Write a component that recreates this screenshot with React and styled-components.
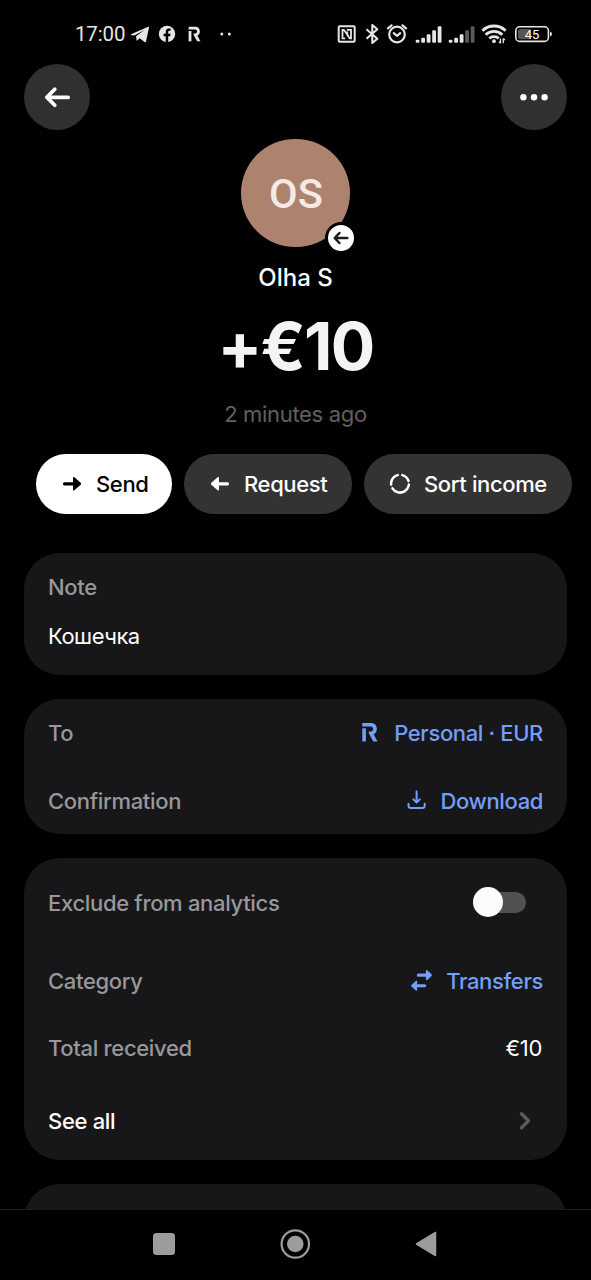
import React from "react";
import styled, { createGlobalStyle } from "styled-components";

const GlobalStyle = createGlobalStyle`
  * {
    box-sizing: border-box;
  }
  body {
    margin: 0;
    background: #000;
    overflow: hidden;
  }
`;

const Screen = styled.div`
  display: flex;
  flex-direction: column;
  width: 591px;
  height: 1280px;
  overflow: hidden;
  background: #000;
  color: #fff;
  font-family: Inter, "Liberation Sans", sans-serif;
`;

const StatusBar = styled.div`
  display: flex;
  justify-content: space-between;
  flex-shrink: 0;
  height: 64px;
  padding: 22px 38px 0 75px;
  color: #e6e6e6;
`;
const StatusGroup = styled.div`
  display: flex;
  height: 24px;
`;
const Clock = styled.span`
  width: 51px;
  font-family: Roboto, sans-serif;
  font-size: 20.5px;
  font-weight: 450;
  line-height: 25px;
  letter-spacing: -0.15px;
  white-space: nowrap;
`;
const StatusIcon = styled.svg`
  display: block;
  flex-shrink: 0;
  width: ${props => props.width}px;
  height: 24px;
  margin-left: ${props => props.$gap || 0}px;
`;

const Content = styled.div`
  display: flex;
  flex-direction: column;
  height: 1145px;
  overflow: hidden;
`;
const Header = styled.div`
  display: flex;
  flex-shrink: 0;
  justify-content: space-between;
  padding: 0 24px;
  height: 75px;
`;
const RoundButton = styled.button`
  display: flex;
  align-items: center;
  justify-content: center;
  width: 66px;
  height: 66px;
  padding: 0;
  border: 0;
  border-radius: 50%;
  background: #303030;
  color: #fff;
`;

const Hero = styled.div`
  display: flex;
  flex-direction: column;
  flex-shrink: 0;
  align-items: center;
  height: 314.5px;
`;
const Avatar = styled.div`
  position: relative;
  display: flex;
  align-items: center;
  justify-content: center;
  width: 108.5px;
  height: 108px;
  padding: 1px 0 0 1px;
  border-radius: 50%;
  background: #ad8370;
  color: #f5e9e4;
  font-family: Roboto, sans-serif;
  font-size: 41.5px;
  font-weight: 500;
  letter-spacing: 0.2px;
`;
const AvatarBadge = styled.div`
  position: absolute;
  right: -7px;
  bottom: -7px;
  display: flex;
  align-items: center;
  justify-content: center;
  width: 32px;
  height: 32px;
  border: 3.5px solid #000;
  border-radius: 50%;
  background: #fff;
`;
const Name = styled.div`
  margin-top: 15.5px;
  font-size: 24px;
  font-weight: 500;
  line-height: 30px;
`;
const Amount = styled.div`
  margin-top: 13px;
  color: #f4f4f4;
  font-size: 66px;
  font-weight: 700;
  line-height: 80px;
  letter-spacing: -1.7px;
`;
const Time = styled.div`
  margin-top: 13.5px;
  color: #606060;
  font-size: 22px;
  line-height: 30px;
  letter-spacing: -0.32px;
`;

const Actions = styled.div`
  display: flex;
  flex-shrink: 0;
  gap: 12px;
  padding-left: 36px;
  height: 99px;
`;
const Action = styled.button`
  display: flex;
  align-items: center;
  flex-shrink: 0;
  gap: 12px;
  width: ${props => props.$width}px;
  height: 60.5px;
  padding: 1px 0 0 24px;
  border: 0;
  border-radius: 31px;
  background: ${props => (props.$primary ? "#fff" : "#333")};
  color: ${props => (props.$primary ? "#000" : "#fff")};
  font-family: inherit;
  font-size: 22px;
  font-weight: 500;
  letter-spacing: -0.37px;
  white-space: nowrap;
`;

const Cards = styled.div`
  display: flex;
  flex-direction: column;
  gap: 24px;
  padding: 0 24px;
`;
const Card = styled.section`
  flex-shrink: 0;
  width: 543px;
  height: ${props => props.$height}px;
  padding: 0 24px;
  border-radius: 36px;
  background: #171719;
`;
const Row = styled.div`
  display: flex;
  align-items: center;
  justify-content: space-between;
  height: ${props => props.$height || 67.3}px;
`;
const Label = styled.span`
  padding-top: 1.4px;
  color: ${props => (props.$bright ? "#fff" : "#98989a")};
  font-size: 22px;
  font-weight: ${props => (props.$bright ? 500 : 450)};
  line-height: 30px;
  letter-spacing: -0.32px;
`;
const NoteText = styled.p`
  margin: 0;
  font-size: 22px;
  line-height: 30px;
  letter-spacing: -0.5px;
`;
const Value = styled.span`
  margin-right: 1px;
  font-size: 22px;
  letter-spacing: -0.3px;
`;
const LinkValue = styled.a`
  display: flex;
  align-items: center;
  gap: 12px;
  padding-top: 1.4px;
  color: #729ffa;
  font-size: 22px;
  font-weight: 500;
  line-height: 30px;
  letter-spacing: -0.37px;
`;
const Toggle = styled.span`
  display: flex;
  align-items: center;
  width: 53px;
  height: 21px;
  margin-right: 17px;
  border-radius: 11px;
  background: #515153;
`;
const Knob = styled.span`
  width: 30px;
  height: 30px;
  border-radius: 50%;
  background: #fbfbfb;
`;
const Chevron = styled.svg`
  margin: 1px 11px 0 0;
`;

const NavBar = styled.nav`
  display: flex;
  align-items: center;
  justify-content: space-between;
  flex-shrink: 0;
  height: 71px;
  padding: 0 154px 1.5px 152px;
  border-top: 1px solid #1c1c1c;
  color: #9c9c9c;
`;

function Bars({ lit, gap }) {
  return (
    <StatusIcon width={27} $gap={gap} viewBox="0 0 27 24">
      {[3, 5, 8.5, 12.5, 16.5].map((h, i) => (
        <rect
          key={h}
          x={0.7 + i * 5.5}
          y={20.8 - h}
          width="3.8"
          height={h}
          rx="1.2"
          fill={i < lit ? "#e6e6e6" : "#5a5a5a"}
        />
      ))}
    </StatusIcon>
  );
}

function RevolutMark() {
  return (
    <g fill="currentColor">
      <path d="M0 4.300h3.500V15H0z" />
      <path d="M0 0h8.600c3.300 0 5.500 1.900 5.500 4.800 0 2.100-1.200 3.600-3.100 4.300L14.800 15h-4.100L6.300 8.400V6.900h2.100c1.300 0 2.100-.8 2.100-2 0-1.300-.9-2.100-2.200-2.100H0z" />
    </g>
  );
}

function Status() {
  return (
    <StatusBar>
      <StatusGroup>
        <Clock>17:00</Clock>
        <StatusIcon width={20} $gap={4} viewBox="0 0 20 24">
          <path
            d="M1 12.3 18.3 4.8q.9-.3.7.7L16 19.4q-.3 1.2-1.4.5l-4.9-3.7-2.4 2.3q-.6.4-.7-.3L6 14.2l8.4-6.3-10 5.6L1 12.9q-.5-.3 0-.6z"
            fill="currentColor"
          />
        </StatusIcon>
        <StatusIcon width={18} $gap={8} viewBox="0 0 18 24">
          <circle cx="9" cy="12" r="8.2" fill="currentColor" />
          <path
            d="M7.7 20.5v-6.2H5.6v-2.5h2.1V10c0-2.2 1.2-3.4 3.2-3.4h1.7v2.2h-1.1c-1 0-1.3.6-1.3 1.3v1.7h2.4l-.4 2.5h-2v6.2z"
            fill="#000"
          />
        </StatusIcon>
        <StatusIcon width={13} $gap={12} viewBox="0 0 13 24">
          <g transform="translate(.6 4.800) scale(.8 .97)">
            <RevolutMark />
          </g>
        </StatusIcon>
        <StatusIcon width={13} $gap={18} viewBox="0 0 13 24">
          <circle cx="2.8" cy="12" r="1.5" fill="currentColor" />
          <circle cx="10.3" cy="12" r="1.5" fill="currentColor" />
        </StatusIcon>
      </StatusGroup>
      <StatusGroup>
        <StatusIcon width={19} viewBox="0 0 19 24" fill="none" stroke="currentColor">
          <rect x="1.7" y="4.2" width="16" height="15.6" rx="1" strokeWidth="2" />
          <path
            d="M8.200 16.300H5.500V7.800h1.200l4.600 6M9.800 7.800H14v8.500h-1.200L10.200 13V9.500"
            strokeWidth="1.800"
          />
        </StatusIcon>
        <StatusIcon width={15} $gap={9} viewBox="0 0 15 24" fill="none" stroke="currentColor">
          <path
            d="m1.500 7.200 10.800 9.600-5 4.200V3l5 4.200L1.500 16.800"
            strokeWidth="2.100"
            strokeLinejoin="round"
          />
        </StatusIcon>
        <StatusIcon
          width={22}
          $gap={6}
          viewBox="0 0 22 24"
          fill="none"
          stroke="currentColor"
          strokeWidth="2.200"
          strokeLinecap="round"
        >
          <circle cx="11" cy="12.500" r="7.800" />
          <path d="M1.900 6.400 5.600 3.300M20.100 6.400 16.400 3.300M7.800 11.200l3.200 2.700 3.200-2.700" />
        </StatusIcon>
        <Bars lit={5} gap={7} />
        <Bars lit={3} gap={6} />
        <StatusIcon width={26} $gap={6} viewBox="0 0 26 24" fill="none" stroke="currentColor">
          <path d="M1.400 8.700a16.800 16.800 0 0 1 23.200 0" strokeWidth="2.900" />
          <path d="M4.700 12.700a12 12 0 0 1 16.600 0" strokeWidth="2.900" />
          <path d="M8.300 16.400a7 7 0 0 1 9.400 0" strokeWidth="2.900" />
          <circle cx="13" cy="19.200" r="1.900" fill="currentColor" stroke="none" />
          <path d="M19.500 16.500v4.800M18 19.700l1.500 1.600M22.300 21.300v-4.800M23.800 18.100l-1.500-1.600" strokeWidth="1.300" />
        </StatusIcon>
        <StatusIcon width={39} $gap={7} viewBox="0 0 39 24">
          <rect
            x="1.800"
            y="4.800"
            width="32.600"
            height="14.600"
            rx="4"
            fill="none"
            stroke="currentColor"
            strokeWidth="1.600"
          />
          <rect x="4" y="7" width="13" height="10.200" rx="2" fill="#555" />
          <path d="M36 9.800q2 .3 2 2.300t-2 2.300z" fill="currentColor" />
          <text
            x="18"
            y="16.700"
            textAnchor="middle"
            fontFamily="Roboto, sans-serif"
            fontSize="13"
            fill="#fff"
          >
            45
          </text>
        </StatusIcon>
      </StatusGroup>
    </StatusBar>
  );
}

function App() {
  return (
    <Screen>
      <GlobalStyle />
      <Status />
      <Content>
        <Header>
          <RoundButton aria-label="Back">
            <svg
              width="28"
              height="22"
              viewBox="0 0 28 22"
              fill="none"
              stroke="currentColor"
              strokeWidth="3.700"
              strokeLinecap="round"
              strokeLinejoin="round"
            >
              <path d="M11.800 3.200 3.800 11.300l8 8M4.500 11.300h20.700" />
            </svg>
          </RoundButton>
          <RoundButton aria-label="More">
            <svg width="28" height="8" viewBox="0 0 28 8" fill="currentColor">
              <circle cx="3.400" cy="4.300" r="3.200" />
              <circle cx="14" cy="4.300" r="3.200" />
              <circle cx="24.600" cy="4.300" r="3.200" />
            </svg>
          </RoundButton>
        </Header>

        <Hero>
          <Avatar>
            OS
            <AvatarBadge>
              <svg
                width="16"
                height="14"
                viewBox="0 0 16 14"
                fill="none"
                stroke="#1c1c1e"
                strokeWidth="2.500"
                strokeLinecap="round"
                strokeLinejoin="round"
              >
                <path d="M6.400 2 1.700 7l4.700 5M2 7h12.300" />
              </svg>
            </AvatarBadge>
          </Avatar>
          <Name>Olha S</Name>
          <Amount>+€10</Amount>
          <Time>2 minutes ago</Time>
        </Hero>

        <Actions>
          <Action $primary $width={136}>
            <svg width="24" height="24" viewBox="0 0 24 24">
              <path
                d="M4.500 10.200H13V6q0-1.600 1.400-.7L20.700 10.800q.9.900 0 1.900l-6.300 5.500q-1.400.9-1.400-.7V13.500H4.500q-1.600-.1-1.600-1.650t1.600-1.650z"
                fill="currentColor"
              />
            </svg>
            Send
          </Action>
          <Action $width={168}>
            <svg width="24" height="24" viewBox="0 0 24 24">
              <path
                d="M19.500 10.200H11V6q0-1.600-1.400-.7L3.300 10.800q-.9.900 0 1.900l6.300 5.500q1.400.9 1.400-.7V13.500h8.500q1.600-.1 1.600-1.650t-1.600-1.650z"
                fill="currentColor"
              />
            </svg>
            Request
          </Action>
          <Action $width={207.5}>
            <svg width="24" height="24" viewBox="0 0 24 24">
              <circle
                cx="12"
                cy="11.700"
                r="8.900"
                pathLength="360"
                fill="none"
                stroke="currentColor"
                strokeWidth="2.500"
                strokeLinecap="round"
                strokeDasharray="57 23 143 26 81 30"
                transform="rotate(-75 12 11.700)"
              />
            </svg>
            Sort income
          </Action>
        </Actions>

        <Cards>
          <Card $height={122.5}>
            <Row $height={68.5}>
              <Label>Note</Label>
            </Row>
            <NoteText>Кошечка</NoteText>
          </Card>

          <Card $height={134.6}>
            <Row>
              <Label>To</Label>
              <LinkValue>
                <svg width="24" height="24" viewBox="0 0 24 24">
                  <g transform="translate(4.300 2) scale(1.030 1.230)">
                    <RevolutMark />
                  </g>
                </svg>
                Personal · EUR
              </LinkValue>
            </Row>
            <Row>
              <Label>Confirmation</Label>
              <LinkValue>
                <svg
                  width="24"
                  height="24"
                  viewBox="0 0 24 24"
                  fill="none"
                  stroke="currentColor"
                  strokeWidth="2"
                  strokeLinecap="round"
                  strokeLinejoin="round"
                >
                  <path d="M3.500 14.800v1.700q0 2.500 2.500 2.500h11.200q2.500 0 2.500-2.500v-1.700M11.600 2.400v11.200M8.400 10.400l3.200 3.200 3.200-3.200" />
                </svg>
                Download
              </LinkValue>
            </Row>
          </Card>

          <Card $height={302}>
            <Row $height={89}>
              <Label>Exclude from analytics</Label>
              <Toggle>
                <Knob />
              </Toggle>
            </Row>
            <Row>
              <Label>Category</Label>
              <LinkValue>
                <svg width="24" height="24" viewBox="0 0 24 24" fill="currentColor">
                  <path d="M8.300 4.600h7.600V2q0-1.500 1.300-.7l4.400 4q.8.800 0 1.600l-4.400 4q-1.300.8-1.300-.7V7.700H8.300q-1.500 0-1.500-1.550t1.500-1.550z" />
                  <path d="M14.700 15.200H7.100v-2.600q0-1.500-1.300-.7l-4.400 4q-.8.800 0 1.600l4.400 4q1.300.8 1.300-.7v-2.500h7.600q1.500 0 1.500-1.550t-1.500-1.550z" />
                </svg>
                Transfers
              </LinkValue>
            </Row>
            <Row>
              <Label>Total received</Label>
              <Value>€10</Value>
            </Row>
            <Row $height={78}>
              <Label $bright>See all</Label>
              <Chevron
                width="14"
                height="20"
                viewBox="0 0 14 20"
                fill="none"
                stroke="#5b5b5d"
                strokeWidth="3.400"
                strokeLinecap="round"
                strokeLinejoin="round"
              >
                <path d="m3.500 2.800 7 7-7 7" />
              </Chevron>
            </Row>
          </Card>

          <Card $height={120} />
        </Cards>
      </Content>

      <NavBar>
        <svg width="24" height="24" viewBox="0 0 24 24">
          <rect x="1" y="1" width="22" height="22" rx="3.500" fill="currentColor" />
        </svg>
        <svg width="30" height="30" viewBox="0 0 30 30" overflow="visible">
          <circle cx="14.300" cy="15" r="13.700" fill="none" stroke="currentColor" strokeWidth="2.200" />
          <circle cx="14.300" cy="15" r="8.300" fill="currentColor" />
        </svg>
        <svg width="22" height="26" viewBox="0 0 22 26">
          <path
            d="M1.500 13 20.500 1.500v23z"
            fill="currentColor"
            stroke="currentColor"
            strokeWidth="1.500"
            strokeLinejoin="round"
          />
        </svg>
      </NavBar>
    </Screen>
  );
}

export default App;
